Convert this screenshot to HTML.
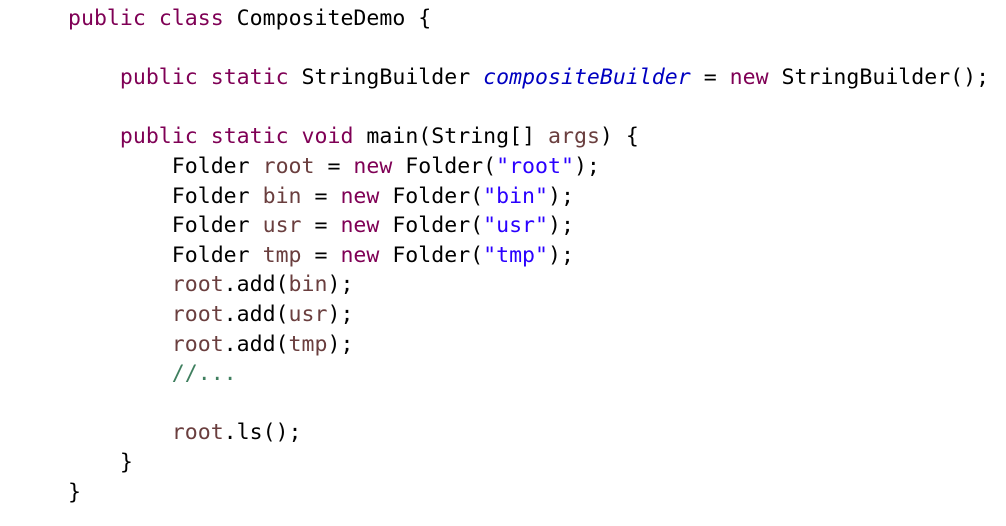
<!DOCTYPE html>
<html><head><style>
html,body{margin:0;background:#fff;width:1006px;height:526px;overflow:hidden}
pre{margin:0;position:absolute;left:68px;top:4px;font-family:"DejaVu Sans Mono","Liberation Mono",monospace;font-size:21.55px;line-height:29.6px;color:#000;letter-spacing:0}
.k{color:#7f0055}.v{color:#6a3e3e}.s{color:#2a00ff}.f{color:#0000c0;font-style:italic}.c{color:#3f7f5f}
</style></head><body>
<pre><span class="k">public</span> <span class="k">class</span> CompositeDemo {

    <span class="k">public</span> <span class="k">static</span> StringBuilder <span class="f">compositeBuilder</span> = <span class="k">new</span> StringBuilder();

    <span class="k">public</span> <span class="k">static</span> <span class="k">void</span> main(String[] <span class="v">args</span>) {
        Folder <span class="v">root</span> = <span class="k">new</span> Folder(<span class="s">"root"</span>);
        Folder <span class="v">bin</span> = <span class="k">new</span> Folder(<span class="s">"bin"</span>);
        Folder <span class="v">usr</span> = <span class="k">new</span> Folder(<span class="s">"usr"</span>);
        Folder <span class="v">tmp</span> = <span class="k">new</span> Folder(<span class="s">"tmp"</span>);
        <span class="v">root</span>.add(<span class="v">bin</span>);
        <span class="v">root</span>.add(<span class="v">usr</span>);
        <span class="v">root</span>.add(<span class="v">tmp</span>);
        <span class="c">//...</span>

        <span class="v">root</span>.ls();
    }
}</pre>
</body></html>
